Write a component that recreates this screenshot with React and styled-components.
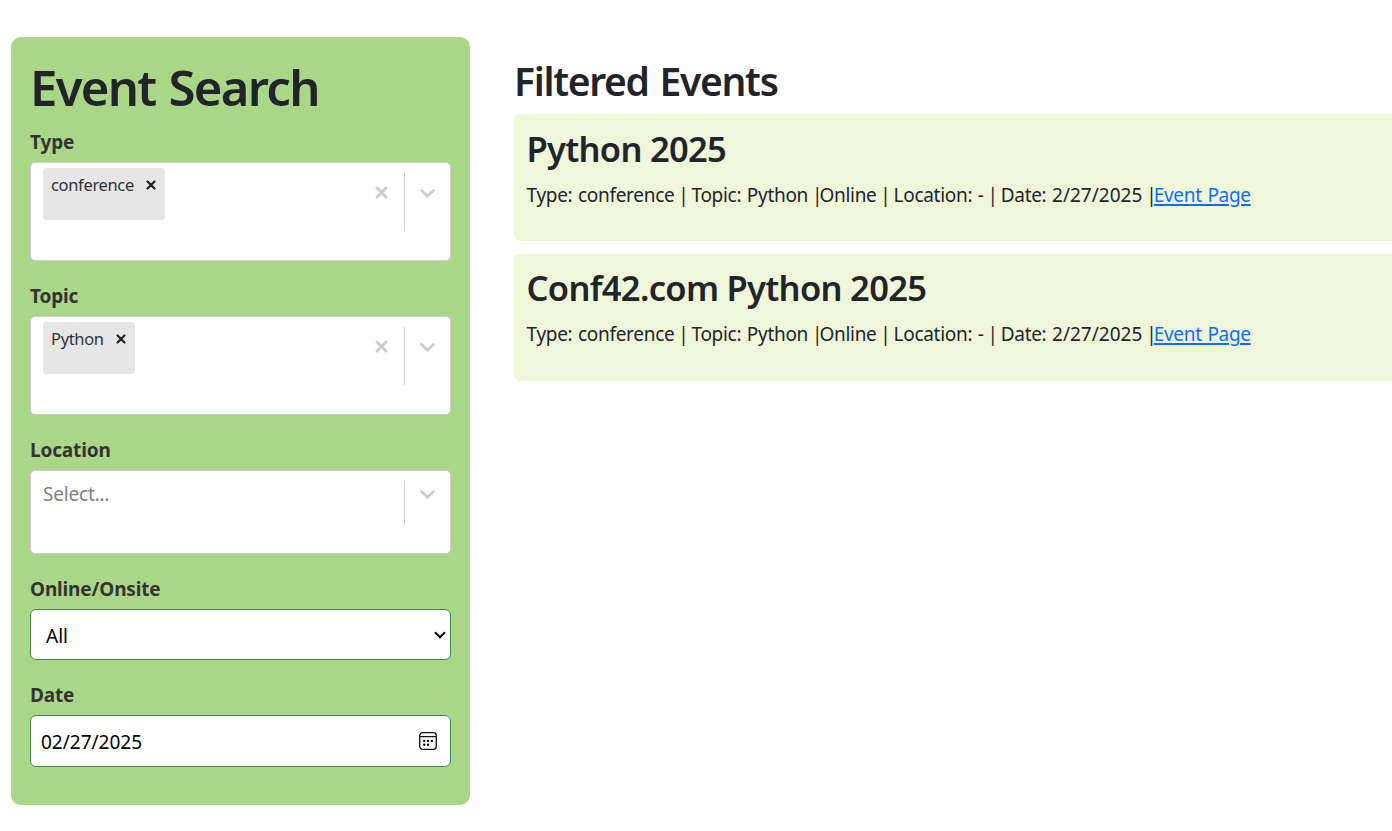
import React from "react";
import styled, { createGlobalStyle } from "styled-components";

const GlobalStyle = createGlobalStyle`
  *, *::before, *::after { box-sizing: border-box; }
  body {
    margin: 0;
    background: #fff;
    color: #212529;
    font-family: "Segoe UI", "Noto Sans", "Open Sans", sans-serif;
    font-size: 19px;
    font-weight: 400;
    line-height: 30px;
    overflow: hidden;
  }
`;

const Page = styled.div`
  display: flex;
  align-items: flex-start;
  gap: 44px;
  height: 831px;
  padding: 37px 0 0 11px;
  overflow: hidden;
`;

const SearchPanel = styled.aside`
  flex: 0 0 459px;
  height: 768px;
  padding: 20px 19px 0;
  border-radius: 10px;
  background: #aad688;
`;

const PanelTitle = styled.h1`
  margin: 0 0 13px;
  font-size: 49px;
  line-height: 60px;
  font-weight: 600;
  letter-spacing: -1.7px;
  word-spacing: 2px;
  white-space: nowrap;
`;

const Field = styled.div`
  display: flex;
  flex-direction: column;
  margin-bottom: 23px;
`;

const Label = styled.label`
  margin-bottom: 8px;
  color: #333;
  font-size: 19px;
  line-height: 24px;
  font-weight: 700;
  letter-spacing: -0.15px;
`;

const SelectBox = styled.div`
  display: flex;
  align-items: flex-start;
  height: ${(p) => p.$height}px;
  border: 1px solid #ccc;
  border-radius: 5px;
  background: #fff;
`;

const Values = styled.div`
  flex: 1;
  padding: 5px 0 0 12px;
`;

const Chip = styled.div`
  display: inline-flex;
  align-items: flex-start;
  height: 52px;
  padding: 4px 9px 0 8px;
  gap: 12px;
  border-radius: 3px;
  background: #e6e6e6;
  color: #333;
  font-size: 16.5px;
  line-height: 26px;
  letter-spacing: -0.34px;
`;

const ChipRemove = styled.svg`
  width: 10px;
  height: 10px;
  margin-top: 8px;
`;

const Placeholder = styled.div`
  padding-top: 3px;
  color: #808080;
  letter-spacing: -0.2px;
`;

const Clear = styled.svg`
  width: 13px;
  height: 13px;
  margin: 23px 16px 0 0;
`;

const Divider = styled.span`
  width: 1px;
  height: ${(p) => p.$height}px;
  margin-top: ${(p) => p.$top}px;
  background: #ccc;
`;

const Chevron = styled.svg`
  width: 15px;
  height: 9px;
  margin: ${(p) => p.$top}px 15px 0 15px;
`;

const Input = styled.div`
  display: flex;
  align-items: center;
  justify-content: space-between;
  height: ${(p) => p.$height}px;
  padding: ${(p) => p.$padding};
  border: 1px solid #43884e;
  border-radius: 6px;
  background: #fff;
  color: #000;
`;

const SelectArrow = styled.svg`
  width: 12px;
  height: 8px;
  margin-bottom: 2px;
`;

const CalendarIcon = styled.svg`
  width: 18px;
  height: 18px;
  margin-bottom: 2px;
`;

const Results = styled.main`
  flex: 0 0 1100px;
  padding-top: 20px;
`;

const ResultsTitle = styled.h2`
  margin: 0 0 9px;
  font-size: 39px;
  line-height: 48px;
  font-weight: 600;
  letter-spacing: -1.3px;
  word-spacing: 2px;
`;

const EventCard = styled.article`
  height: 127px;
  margin: 0 0 12.7px;
  padding: 12.7px 12.5px 0;
  border-radius: 6px;
  background: #f0f6da;
`;

const EventTitle = styled.h3`
  margin: 0 0 10px;
  font-size: 34.5px;
  line-height: 43px;
  font-weight: 600;
  letter-spacing: -0.7px;
`;

const EventInfo = styled.p`
  margin: 0;
  letter-spacing: -0.3px;
  word-spacing: 1px;
  white-space: nowrap;
`;

const Pipe = styled.span`
  margin: 0 -2.6px 0 -1.8px;
`;

const EventDate = styled.time`
  letter-spacing: 0;
`;

const EventLink = styled.a`
  color: #0d6efd;
  text-decoration: underline;
  text-decoration-thickness: 2px;
  text-underline-offset: 2px;
`;

const cross = "M2 2 L11 11 M11 2 L2 11";

function MultiSelect({ label, value }) {
  return (
    <Field>
      <Label>{label}</Label>
      <SelectBox $height={value ? 99 : 84}>
        <Values>
          {value ? (
            <Chip>
              {value}
              <ChipRemove viewBox="0 0 13 13">
                <path d={cross} stroke="#212529" strokeWidth="2.9" strokeLinecap="round" />
              </ChipRemove>
            </Chip>
          ) : (
            <Placeholder>Select...</Placeholder>
          )}
        </Values>
        {value && (
          <Clear viewBox="0 0 13 13">
            <path d={cross} stroke="#ccc" strokeWidth="3" strokeLinecap="round" />
          </Clear>
        )}
        <Divider $top={10} $height={value ? 58 : 44} />
        <Chevron $top={value ? 26 : 19} viewBox="0 0 15 9">
          <path d="M1.5 1.5 L7.5 7 L13.5 1.5" fill="none" stroke="#ccc" strokeWidth="2.8" strokeLinecap="round" />
        </Chevron>
      </SelectBox>
    </Field>
  );
}

const events = ["Python 2025", "Conf42.com Python 2025"];

export default function App() {
  return (
    <>
      <GlobalStyle />
      <Page>
        <SearchPanel>
          <PanelTitle>Event Search</PanelTitle>
          <MultiSelect label="Type" value="conference" />
          <MultiSelect label="Topic" value="Python" />
          <MultiSelect label="Location" />
          <Field>
            <Label>Online/Onsite</Label>
            <Input $height={51} $padding="2px 4px 0 15px">
              All
              <SelectArrow viewBox="0 0 12 8">
                <path d="M1 1.3 L6 6.2 L11 1.3" fill="none" stroke="#000" strokeWidth="2.1" />
              </SelectArrow>
            </Input>
          </Field>
          <Field>
            <Label>Date</Label>
            <Input $height={52} $padding="2px 13px 0 10px">
              02/27/2025
              <CalendarIcon viewBox="0 0 18 18">
                <rect x="0.7" y="0.7" width="16.6" height="16.6" rx="3" fill="none" stroke="#111" strokeWidth="1.3" />
                <path d="M1 4.6 H17" stroke="#111" strokeWidth="1.3" />
                <g fill="#111">
                  <circle cx="5.2" cy="9" r="1.2" />
                  <circle cx="9" cy="9" r="1.2" />
                  <circle cx="12.8" cy="9" r="1.2" />
                  <circle cx="5.2" cy="12.7" r="1.2" />
                  <circle cx="9" cy="12.7" r="1.2" />
                </g>
              </CalendarIcon>
            </Input>
          </Field>
        </SearchPanel>
        <Results>
          <ResultsTitle>Filtered Events</ResultsTitle>
          {events.map((name) => (
            <EventCard key={name}>
              <EventTitle>{name}</EventTitle>
              <EventInfo>
                Type: conference <Pipe>|</Pipe> Topic: Python <Pipe>|</Pipe>Online <Pipe>|</Pipe>{" "}
                Location: - <Pipe>|</Pipe> Date: <EventDate>2/27/2025</EventDate> <Pipe>|</Pipe>
                <EventLink>Event Page</EventLink>
              </EventInfo>
            </EventCard>
          ))}
        </Results>
      </Page>
    </>
  );
}
